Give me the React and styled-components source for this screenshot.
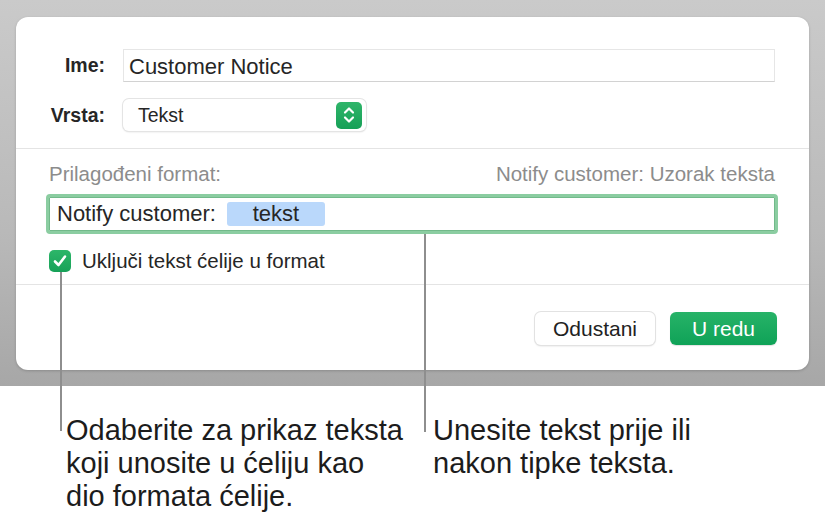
import React from 'react';
import styled, { createGlobalStyle } from 'styled-components';

const GlobalStyle = createGlobalStyle`
  body {
    margin: 0;
    background: #fff;
    font-family: "Liberation Sans", Arial, sans-serif;
    color: #222;
  }
`;

const Page = styled.div`
  position: relative;
  width: 825px;
  height: 521px;
  overflow: hidden;
  background: #fff;
`;

const Backdrop = styled.div`
  padding: 17px 16px 16px 16px;
  background: linear-gradient(180deg, #cacaca 0%, #b9b9b9 60%, #a7a7a7 100%);
`;

const Dialog = styled.div`
  background: #fff;
  border-radius: 12px;
  height: 353px;
  display: flex;
  flex-direction: column;
  box-shadow: 0 1px 3px rgba(0, 0, 0, 0.18);
`;

const TopSection = styled.div`
  display: grid;
  grid-template-columns: 59px 1fr;
  column-gap: 18px;
  row-gap: 17px;
  align-items: center;
  padding: 32px 34px 17px 30px;
  border-bottom: 1px solid #e4e4e4;
`;

const Label = styled.div`
  text-align: right;
  font-weight: bold;
  font-size: 19.5px;
  color: #262626;
`;

const TextInput = styled.div`
  height: 33px;
  box-sizing: border-box;
  border: 1px solid #e6e6e6;
  border-bottom-color: #d2d2d2;
  padding: 2px 0 0 5px;
  display: flex;
  align-items: center;
  font-size: 22px;
  color: #262626;
`;

const Popup = styled.div`
  width: 243px;
  height: 32px;
  box-sizing: border-box;
  border-radius: 6px;
  background: #fff;
  box-shadow: 0 0 0 1px #e4e4e4, 0 1px 2px rgba(0, 0, 0, 0.16);
  display: flex;
  align-items: center;
  justify-content: space-between;
  padding: 0 4px 0 15px;
  font-size: 19.5px;
  color: #262626;
`;

const Stepper = styled.div`
  width: 26px;
  height: 27px;
  border-radius: 5px;
  background: linear-gradient(180deg, #2fb56a 0%, #16a057 100%);
  display: flex;
  align-items: center;
  justify-content: center;
`;

const MiddleSection = styled.div`
  padding: 13px 34px 0 33px;
  height: 136px;
  box-sizing: border-box;
  border-bottom: 1px solid #e4e4e4;
`;

const HintRow = styled.div`
  display: flex;
  justify-content: space-between;
  font-size: 20.5px;
  color: #8c8c8c;
  line-height: 24px;
`;

const FormatField = styled.div`
  margin: 8px -3px 0 -3px;
  height: 40px;
  box-sizing: border-box;
  border: 3px solid #8bcda1;
  border-radius: 4px;
  box-shadow: inset 0 0 0 1px #72b98a;
  display: flex;
  align-items: center;
  padding-left: 8px;
  gap: 11px;
  font-size: 22px;
  color: #262626;
`;

const Token = styled.span`
  display: inline-flex;
  align-items: center;
  justify-content: center;
  width: 98px;
  height: 24px;
  border-radius: 3px;
  background: #bad8fb;
  font-size: 22px;
  color: #262626;
`;

const CheckRow = styled.div`
  margin-top: 15px;
  display: flex;
  align-items: center;
  gap: 11px;
  font-size: 20.5px;
  color: #262626;
`;

const CheckBox = styled.span`
  width: 22px;
  height: 22px;
  border-radius: 5px;
  background: linear-gradient(180deg, #2db669 0%, #17a158 100%);
  display: inline-flex;
  align-items: center;
  justify-content: center;
`;

const ButtonRow = styled.div`
  display: flex;
  justify-content: flex-end;
  gap: 15px;
  padding: 27px 32px 0 0;
`;

const Button = styled.div`
  height: 33px;
  box-sizing: border-box;
  display: flex;
  align-items: center;
  justify-content: center;
  border-radius: 6px;
  font-size: 21px;
  width: ${(p) => p.$width}px;
  color: ${(p) => (p.$primary ? '#fff' : '#222')};
  background: ${(p) =>
    p.$primary ? 'linear-gradient(180deg, #27b368 0%, #0fa257 100%)' : '#fff'};
  box-shadow: ${(p) =>
    p.$primary
      ? '0 1px 1px rgba(0,0,0,0.12)'
      : '0 0 0 1px #e2e2e2, 0 1px 2px rgba(0,0,0,0.18)'};
`;

const Captions = styled.div`
  display: grid;
  grid-template-columns: 367px auto;
  padding: 28px 0 0 66px;
  font-size: 29px;
  line-height: 33px;
  color: #1c1c1c;
`;

const Caption = styled.div`
  white-space: pre-line;
`;

const Callout = styled.div`
  position: absolute;
  width: 2px;
  background: #8e8e8e;
  left: ${(p) => p.$x}px;
  top: ${(p) => p.$top}px;
  height: ${(p) => p.$height}px;
`;

const StepperIcon = () => (
  <svg width="14" height="20" viewBox="0 0 14 20" fill="none">
    <path d="M3 7.5 L7 3.5 L11 7.5" stroke="#fff" strokeWidth="2.2" strokeLinecap="round" strokeLinejoin="round" />
    <path d="M3 12.5 L7 16.5 L11 12.5" stroke="#fff" strokeWidth="2.2" strokeLinecap="round" strokeLinejoin="round" />
  </svg>
);

const CheckIcon = () => (
  <svg width="16" height="16" viewBox="0 0 16 16" fill="none">
    <path d="M3 8.5 L6.5 12 L13 3.5" stroke="#fff" strokeWidth="2.6" strokeLinecap="round" strokeLinejoin="round" />
  </svg>
);

const App = () => {
  return (
    <Page>
      <GlobalStyle />
      <Backdrop>
        <Dialog>
          <TopSection>
            <Label>Ime:</Label>
            <TextInput>Customer Notice</TextInput>
            <Label>Vrsta:</Label>
            <Popup>
              <span>Tekst</span>
              <Stepper>
                <StepperIcon />
              </Stepper>
            </Popup>
          </TopSection>
          <MiddleSection>
            <HintRow>
              <span>Prilagođeni format:</span>
              <span>Notify customer: Uzorak teksta</span>
            </HintRow>
            <FormatField>
              <span>Notify customer:</span>
              <Token>tekst</Token>
            </FormatField>
            <CheckRow>
              <CheckBox>
                <CheckIcon />
              </CheckBox>
              <span>Uključi tekst ćelije u format</span>
            </CheckRow>
          </MiddleSection>
          <ButtonRow>
            <Button $width={120}>Odustani</Button>
            <Button $width={107} $primary>U redu</Button>
          </ButtonRow>
        </Dialog>
      </Backdrop>
      <Captions>
        <Caption>{'Odaberite za prikaz teksta\nkoji unosite u ćeliju kao\ndio formata ćelije.'}</Caption>
        <Caption>{'Unesite tekst prije ili\nnakon tipke teksta.'}</Caption>
      </Captions>
      <Callout $x={60} $top={272} $height={159} />
      <Callout $x={424} $top={234} $height={198} />
    </Page>
  );
};

export default App;
